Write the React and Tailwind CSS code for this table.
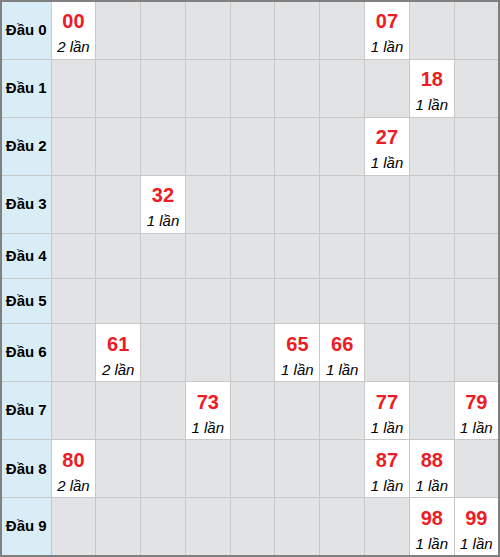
import React from "react";

const hits = {
  0: { 0: 2, 7: 1 },
  1: { 8: 1 },
  2: { 7: 1 },
  3: { 2: 1 },
  4: {},
  5: {},
  6: { 1: 2, 5: 1, 6: 1 },
  7: { 3: 1, 7: 1, 9: 1 },
  8: { 0: 2, 7: 1, 8: 1 },
  9: { 8: 1, 9: 1 },
};

export default function App() {
  return (
    <div className="w-[500px] h-[557px] bg-white" style={{ fontFamily: '"Liberation Sans", Arial, sans-serif' }}>
      <table className="w-[500px] h-[557px] table-fixed border-collapse border-2 border-[#808080]">
        <colgroup>
          <col className="w-[50px]" />
          {Array.from({ length: 10 }).map((_, i) => (
            <col key={i} />
          ))}
        </colgroup>
        <tbody>
          {Array.from({ length: 10 }).map((_, r) => {
            const row = hits[r];
            const tall = Object.keys(row).length > 0;
            return (
              <tr key={r} className={tall ? "h-[58px]" : "h-[45px]"}>
                <td className="bg-[#d9edf7] border border-[#c8c8c8] text-center text-[15px] font-bold text-black p-0">
                  Đầu {r}
                </td>
                {Array.from({ length: 10 }).map((_, c) => {
                  const n = row[c];
                  if (n) {
                    return (
                      <td key={c} className="bg-white border border-[#c8c8c8] text-center p-0 pt-[6px] align-middle">
                        <div className="text-[20px] leading-[24px] font-bold text-[#ed1c24]">
                          {r}{c}
                        </div>
                        <div className="text-[15px] leading-[20px] italic text-black mt-[4px]">
                          {n} lần
                        </div>
                      </td>
                    );
                  }
                  return <td key={c} className="bg-[#e2e3e5] border border-[#c8c8c8] p-0" />;
                })}
              </tr>
            );
          })}
        </tbody>
      </table>
    </div>
  );
}
